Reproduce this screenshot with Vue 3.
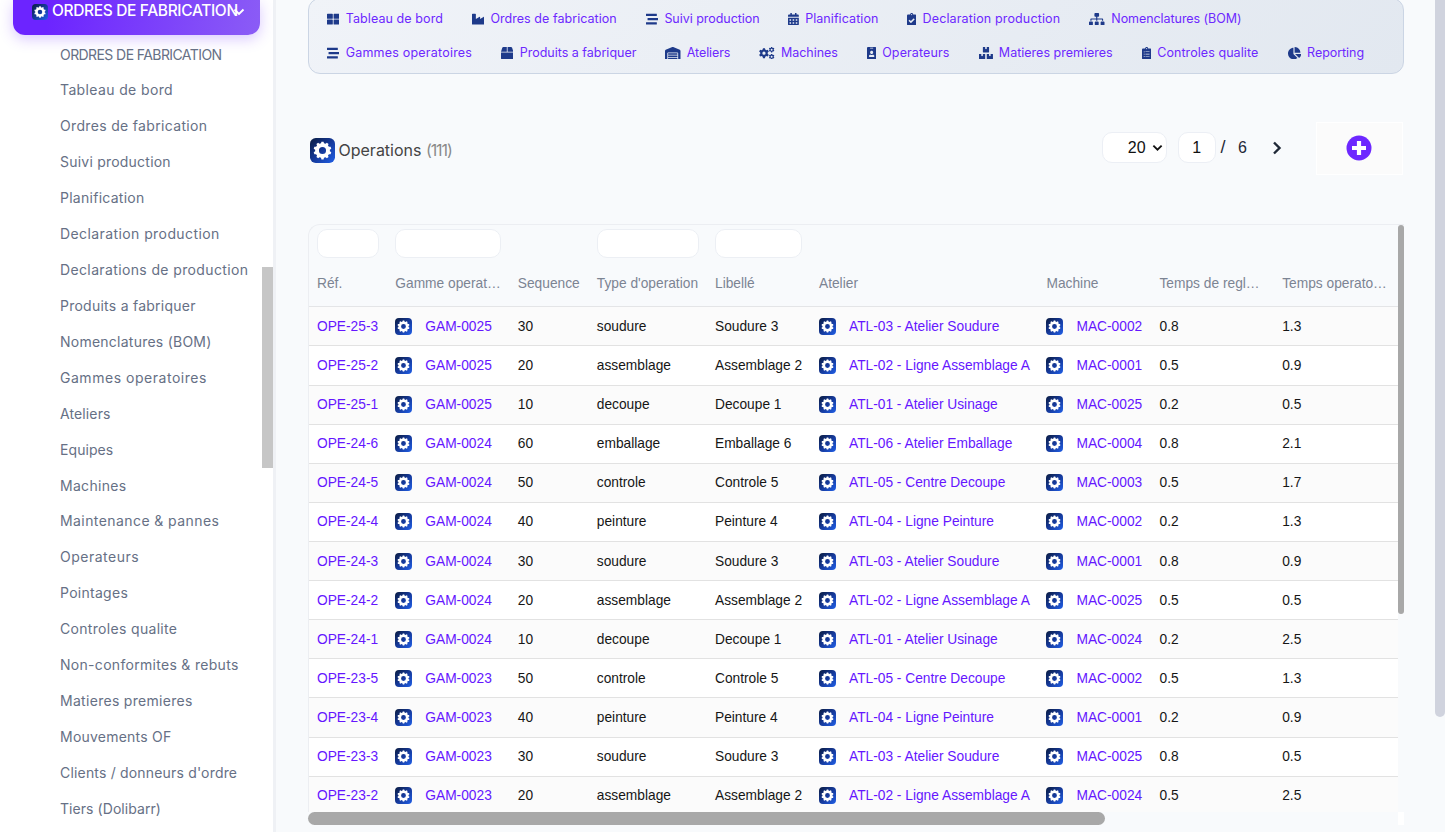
<template>
    <div class="app">
        <aside class="sidebar">
            <div class="sidebar__active">
                <svg class="sidebar__logo" viewBox="0 0 26 26"><use href="#logo" /></svg>
                <span class="sidebar__active-text">ORDRES DE FABRICATION</span>
                <svg class="sidebar__chevron" viewBox="0 0 12 8">
                    <path d="M1.5 1.5 6 6l4.5-4.5" fill="none" stroke="#ffffff" stroke-width="1.9" />
                </svg>
            </div>
            <ul class="sidebar__list">
                <li v-for="item in sideItems" :key="item.label" class="sidebar__item">
                    <span :style="{ letterSpacing: item.track + 'px' }">{{ item.label }}</span>
                </li>
            </ul>
            <span class="sidebar__scroll"></span>
        </aside>

        <main class="main">
            <nav class="topnav">
                <div v-for="(row, i) in navRows" :key="i" class="topnav__row">
                    <a v-for="link in row" :key="link.label" class="topnav__link" :style="{ width: link.width + 'px' }">
                        <svg
                            class="topnav__icon"
                            :viewBox="`0 0 ${icons[link.icon].w} 512`"
                            :style="{ width: (icons[link.icon].w / 512) * 12.4 + 'px' }"
                        >
                            <path :d="icons[link.icon].d" fill-rule="evenodd" />
                        </svg>
                        <span :style="{ letterSpacing: link.track + 'px' }">{{ link.label }}</span>
                    </a>
                </div>
            </nav>

            <header class="titlebar">
                <svg class="titlebar__logo" viewBox="0 0 26 26"><use href="#logo" /></svg>
                <h1 class="titlebar__title">Operations <span class="titlebar__count">(111)</span></h1>
                <div class="pager">
                    <div class="pager__select">
                        <span>20</span>
                        <svg viewBox="0 0 12 8">
                            <path d="M1.5 1.5 6 5.8l4.5-4.3" fill="none" stroke="#111111" stroke-width="2" />
                        </svg>
                    </div>
                    <div class="pager__page">1</div>
                    <span class="pager__slash">/</span>
                    <span class="pager__total">6</span>
                    <svg class="pager__next" viewBox="0 0 10 14">
                        <path d="M2 1.5 7.5 7 2 12.5" fill="none" stroke="#1f2937" stroke-width="2.4" />
                    </svg>
                </div>
                <div class="add">
                    <svg viewBox="0 0 26 26">
                        <circle cx="13" cy="13" r="12.5" fill="#6d28ff" />
                        <path d="M13 6v14M6 13h14" stroke="#ffffff" stroke-width="4.2" />
                    </svg>
                </div>
            </header>

            <section class="panel">
                <div class="panel__view">
                    <table class="grid">
                        <colgroup>
                            <col v-for="col in columns" :key="col.label" :style="{ width: col.width + 'px' }" />
                        </colgroup>
                        <thead>
                            <tr class="grid__filters">
                                <th v-for="col in columns" :key="col.label">
                                    <input v-if="col.filter" type="text" :style="{ width: col.filter + 'px' }" />
                                </th>
                            </tr>
                            <tr class="grid__labels">
                                <th v-for="col in columns" :key="col.label">{{ col.label }}</th>
                            </tr>
                        </thead>
                        <tbody>
                            <tr v-for="row in rows" :key="row.ref">
                                <td><a>{{ row.ref }}</a></td>
                                <td>
                                    <a class="grid__link"><svg viewBox="0 0 26 26"><use href="#logo" /></svg>{{ row.gamme }}</a>
                                </td>
                                <td>{{ row.seq }}</td>
                                <td>{{ row.type }}</td>
                                <td>{{ row.label }}</td>
                                <td>
                                    <a class="grid__link"><svg viewBox="0 0 26 26"><use href="#logo" /></svg>{{ row.atelier }}</a>
                                </td>
                                <td>
                                    <a class="grid__link"><svg viewBox="0 0 26 26"><use href="#logo" /></svg>{{ row.machine }}</a>
                                </td>
                                <td>{{ row.setup }}</td>
                                <td>{{ row.time }}</td>
                            </tr>
                        </tbody>
                    </table>
                    <div class="panel__vtrack"><span class="panel__vthumb"></span></div>
                </div>
                <div class="panel__htrack">
                    <span class="panel__hthumb"></span>
                    <span class="panel__corner"></span>
                </div>
            </section>
        </main>
        <span class="page-scroll"></span>

        <svg class="defs" width="0" height="0">
            <defs>
                <linearGradient id="badge" x1="0" y1="0" x2="1" y2="1">
                    <stop offset="0" stop-color="#0b1c40" />
                    <stop offset="0.5" stop-color="#15399a" />
                    <stop offset="1" stop-color="#2160e8" />
                </linearGradient>
                <symbol id="logo" viewBox="0 0 26 26">
                    <rect width="26" height="26" rx="6" fill="url(#badge)" />
                    <path :d="badgeGear" fill="#ffffff" fill-rule="evenodd" />
                </symbol>
            </defs>
        </svg>
    </div>
</template>

<script setup>
// Gear outline with a round hole in the middle
function gear(cx, cy, outer, inner, hole, teeth) {
    const step = (Math.PI * 2) / teeth;
    const points = [];
    for (let i = 0; i < teeth; i++) {
        const a = i * step - Math.PI / 2;
        [[-0.32, inner], [-0.19, outer], [0.19, outer], [0.32, inner]].forEach(([k, r]) => {
            const x = cx + Math.cos(a + k * step) * r;
            const y = cy + Math.sin(a + k * step) * r;
            points.push(`${x.toFixed(2)} ${y.toFixed(2)}`);
        });
    }
    return `M${points.join('L')}ZM${cx - hole} ${cy}a${hole} ${hole} 0 1 0 ${hole * 2} 0a${hole} ${hole} 0 1 0 ${-hole * 2} 0Z`;
}

const badgeGear = gear(13, 13, 9.3, 7.7, 3.7, 10);

const board = 'M336 64h-80c0-35.3-28.7-64-64-64s-64 28.7-64 64H48C21.5 64 0 85.5 0 112v352c0 26.5 21.5 48 48 48h288c26.5 0 48-21.5 48-48V112c0-26.5-21.5-48-48-48zM192 40c13.3 0 24 10.7 24 24s-10.7 24-24 24-24-10.7-24-24 10.7-24 24-24z';

const calendarCells = [64, 192, 320].map((x) => [256, 384].map((y) => `M${x} ${y}h64v64h-64z`).join('')).join('');

const icons = {
    grid: { w: 512, d: 'M296 32h192c13.255 0 24 10.745 24 24v160c0 13.255-10.745 24-24 24H296c-13.255 0-24-10.745-24-24V56c0-13.255 10.745-24 24-24zm-80 0H24C10.745 32 0 42.745 0 56v160c0 13.255 10.745 24 24 24h192c13.255 0 24-10.745 24-24V56c0-13.255-10.745-24-24-24zM0 296v160c0 13.255 10.745 24 24 24h192c13.255 0 24-10.745 24-24V296c0-13.255-10.745-24-24-24H24c-13.255 0-24 10.745-24 24zm296 184h192c13.255 0 24-10.745 24-24V296c0-13.255-10.745-24-24-24H296c-13.255 0-24 10.745-24 24v160c0 13.255 10.745 24 24 24z' },
    industry: { w: 512, d: 'M475.115 163.781L336 252.309v-68.28c0-18.916-20.931-30.399-36.885-20.248L160 252.309V56c0-13.255-10.745-24-24-24H24C10.745 32 0 42.745 0 56v400c0 13.255 10.745 24 24 24h464c13.255 0 24-10.745 24-24V184.029c0-18.917-20.931-30.399-36.885-20.248z' },
    stream: { w: 512, d: 'M16 128h416c8.84 0 16-7.16 16-16V48c0-8.84-7.16-16-16-16H16C7.16 32 0 39.16 0 48v64c0 8.84 7.16 16 16 16zm480 80H80c-8.84 0-16 7.16-16 16v64c0 8.84 7.16 16 16 16h416c8.84 0 16-7.16 16-16v-64c0-8.84-7.16-16-16-16zm-64 176H16c-8.84 0-16 7.16-16 16v64c0 8.84 7.16 16 16 16h416c8.84 0 16-7.16 16-16v-64c0-8.84-7.16-16-16-16z' },
    calendar: { w: 448, d: `M0 464c0 26.5 21.5 48 48 48h352c26.5 0 48-21.5 48-48V192H0v272z${calendarCells}M400 64h-48V16c0-8.8-7.2-16-16-16h-32c-8.8 0-16 7.2-16 16v48H160V16c0-8.8-7.2-16-16-16h-32c-8.8 0-16 7.2-16 16v48H48C21.5 64 0 85.5 0 112v48h448v-48c0-26.5-21.5-48-48-48z` },
    check: { w: 384, d: `${board}M313.2 271.8l-143 141.8c-4.7 4.7-12.3 4.6-17-.1l-82.6-83.3c-4.7-4.7-4.6-12.3.1-17L99.1 285c4.7-4.7 12.3-4.6 17 .1l46 46.4 106-105.2c4.7-4.7 12.3-4.6 17 .1l28.2 28.4c4.7 4.8 4.6 12.3-.1 17z` },
    sitemap: { w: 640, d: 'M128 352H32c-17.67 0-32 14.33-32 32v96c0 17.67 14.33 32 32 32h96c17.67 0 32-14.33 32-32v-96c0-17.67-14.33-32-32-32zm-24-80h192v48h48v-48h192v48h48v-57.59c0-21.17-17.23-38.41-38.41-38.41H344v-64h40c17.67 0 32-14.33 32-32V32c0-17.67-14.33-32-32-32H256c-17.67 0-32 14.33-32 32v96c0 17.67 14.33 32 32 32h40v64H94.41C73.23 224 56 241.23 56 262.41V320h48v-48zm264 80h-96c-17.67 0-32 14.33-32 32v96c0 17.67 14.33 32 32 32h96c17.67 0 32-14.33 32-32v-96c0-17.67-14.33-32-32-32zm240 0h-96c-17.67 0-32 14.33-32 32v96c0 17.67 14.33 32 32 32h96c17.67 0 32-14.33 32-32v-96c0-17.67-14.33-32-32-32z' },
    box: { w: 512, d: 'M509.5 184.6L458.9 32.8C452.4 13.2 434.1 0 413.4 0H272v192h238.7c-.4-2.5-.4-5-1.2-7.4zM240 0H98.6c-20.7 0-39 13.2-45.5 32.8L2.5 184.6c-.8 2.4-.8 4.9-1.2 7.4H240V0zM0 224v240c0 26.5 21.5 48 48 48h416c26.5 0 48-21.5 48-48V224H0z' },
    warehouse: { w: 640, d: 'M504 352H136.4c-4.4 0-8 3.6-8 8l-.1 48c0 4.4 3.6 8 8 8H504c4.4 0 8-3.6 8-8v-48c0-4.4-3.6-8-8-8zm0 96H136.1c-4.4 0-8 3.6-8 8l-.1 48c0 4.4 3.6 8 8 8h368c4.4 0 8-3.6 8-8v-48c0-4.4-3.6-8-8-8zm0-192H136.6c-4.4 0-8 3.6-8 8l-.1 48c0 4.4 3.6 8 8 8H504c4.4 0 8-3.6 8-8v-48c0-4.4-3.6-8-8-8zm106.5-139L338.4 3.7a48.15 48.15 0 0 0-36.9 0L29.5 117C11.7 124.5 0 141.9 0 161.3V504c0 4.4 3.6 8 8 8h80c4.4 0 8-3.6 8-8V256c0-17.6 14.6-32 32.6-32h382.8c18 0 32.6 14.4 32.6 32v248c0 4.4 3.6 8 8 8h80c4.4 0 8-3.6 8-8V161.3c0-19.4-11.7-36.8-29.5-44.3z' },
    cogs: { w: 640, d: gear(205, 256, 212, 158, 66, 6) + gear(522, 112, 118, 90, 40, 6) + gear(522, 400, 118, 90, 40, 6) },
    badge: { w: 384, d: 'M336 0H48C21.5 0 0 21.5 0 48v416c0 26.5 21.5 48 48 48h288c26.5 0 48-21.5 48-48V48c0-26.5-21.5-48-48-48zM144 32h96c8.8 0 16 7.2 16 16s-7.2 16-16 16h-96c-8.8 0-16-7.2-16-16s7.2-16 16-16zm48 128c35.3 0 64 28.7 64 64s-28.7 64-64 64-64-28.7-64-64 28.7-64 64-64zm112 236.8c0 10.6-10 19.2-22.4 19.2H102.4C90 416 80 407.4 80 396.8v-19.2c0-31.8 30.1-57.6 67.2-57.6h5c12.3 5.1 25.7 8 39.8 8s27.6-2.9 39.8-8h5c37.1 0 67.2 25.8 67.2 57.6v19.2z' },
    boxes: { w: 576, d: 'M560 288h-80v96l-32-21.3-32 21.3v-96h-80c-8.8 0-16 7.2-16 16v192c0 8.8 7.2 16 16 16h224c8.8 0 16-7.2 16-16V304c0-8.8-7.2-16-16-16zm-384-64h224c8.8 0 16-7.2 16-16V16c0-8.8-7.2-16-16-16h-80v96l-32-21.3L256 96V0h-80c-8.8 0-16 7.2-16 16v192c0 8.8 7.2 16 16 16zm64 64h-80v96l-32-21.3L96 384v-96H16c-8.8 0-16 7.2-16 16v192c0 8.8 7.2 16 16 16h224c8.8 0 16-7.2 16-16V304c0-8.8-7.2-16-16-16z' },
    list: { w: 384, d: `${board}M72 182h40v32H72zM144 186h168v24H144zM72 278h40v32H72zM144 282h168v24H144zM72 374h40v32H72zM144 378h168v24H144z` },
    pie: { w: 544, d: 'M527.79 288H290.5l158.03 158.03c6.04 6.04 15.98 6.53 22.19.68 38.7-36.46 65.32-85.61 73.13-140.86 1.34-9.46-6.51-17.85-16.06-17.85zm-15.83-64.8C503.72 103.74 408.26 8.28 288.8.04 279.68-.59 272 7.1 272 16.24V240h223.77c9.14 0 16.82-7.68 16.19-16.8zM224 288V50.71c0-9.55-8.39-17.4-17.84-16.06C86.99 51.49-4.1 155.6.14 280.37 4.5 408.51 114.83 513.59 243.03 511.98c50.4-.63 96.97-16.87 135.26-44.03 7.9-5.6 8.42-17.23 1.57-24.08L224 288z' }
};

const navRows = [
    [
        { label: 'Tableau de bord', icon: 'grid', width: 144.7, track: 0.09 },
        { label: 'Ordres de fabrication', icon: 'industry', width: 174, track: 0.05 },
        { label: 'Suivi production', icon: 'stream', width: 142.3, track: -0.04 },
        { label: 'Planification', icon: 'calendar', width: 119, track: 0.07 },
        { label: 'Declaration production', icon: 'check', width: 182.5, track: 0.14 },
        { label: 'Nomenclatures (BOM)', icon: 'sitemap', width: 160, track: -0.06 }
    ],
    [
        { label: 'Gammes operatoires', icon: 'stream', width: 174, track: 0.21 },
        { label: 'Produits a fabriquer', icon: 'box', width: 164, track: 0 },
        { label: 'Ateliers', icon: 'warehouse', width: 94.3, track: -0.1 },
        { label: 'Machines', icon: 'cogs', width: 107.3, track: -0.06 },
        { label: 'Operateurs', icon: 'badge', width: 112, track: 0.12 },
        { label: 'Matieres premieres', icon: 'boxes', width: 163, track: 0.01 },
        { label: 'Controles qualite', icon: 'list', width: 146, track: 0.07 },
        { label: 'Reporting', icon: 'pie', width: 90, track: -0.04 }
    ]
];

const sideItems = [
    { label: 'ORDRES DE FABRICATION', track: -0.58 },
    { label: 'Tableau de bord', track: 0.37 },
    { label: 'Ordres de fabrication', track: 0.33 },
    { label: 'Suivi production', track: 0.22 },
    { label: 'Planification', track: 0.27 },
    { label: 'Declaration production', track: 0.41 },
    { label: 'Declarations de production', track: 0.37 },
    { label: 'Produits a fabriquer', track: 0.25 },
    { label: 'Nomenclatures (BOM)', track: 0.24 },
    { label: 'Gammes operatoires', track: 0.53 },
    { label: 'Ateliers', track: 0.12 },
    { label: 'Equipes', track: 0.07 },
    { label: 'Machines', track: 0.3 },
    { label: 'Maintenance & pannes', track: 0.42 },
    { label: 'Operateurs', track: 0.5 },
    { label: 'Pointages', track: 0.28 },
    { label: 'Controles qualite', track: 0.32 },
    { label: 'Non-conformites & rebuts', track: 0.3 },
    { label: 'Matieres premieres', track: 0.3 },
    { label: 'Mouvements OF', track: 0.23 },
    { label: "Clients / donneurs d'ordre", track: 0.18 },
    { label: 'Tiers (Dolibarr)', track: 0.06 }
];

const columns = [
    { label: 'Réf.', width: 78.3, filter: 62 },
    { label: 'Gamme operat…', width: 122.5, filter: 106 },
    { label: 'Sequence', width: 79 },
    { label: "Type d'operation", width: 118.2, filter: 102 },
    { label: 'Libellé', width: 104, filter: 87 },
    { label: 'Atelier', width: 227.5 },
    { label: 'Machine', width: 113 },
    { label: 'Temps de regl…', width: 122.7 },
    { label: 'Temps operato…', width: 123.3 }
];

const steps = {
    10: { type: 'decoupe', label: 'Decoupe 1', atelier: 'ATL-01 - Atelier Usinage', setup: '0.2' },
    20: { type: 'assemblage', label: 'Assemblage 2', atelier: 'ATL-02 - Ligne Assemblage A', setup: '0.5' },
    30: { type: 'soudure', label: 'Soudure 3', atelier: 'ATL-03 - Atelier Soudure', setup: '0.8' },
    40: { type: 'peinture', label: 'Peinture 4', atelier: 'ATL-04 - Ligne Peinture', setup: '0.2' },
    50: { type: 'controle', label: 'Controle 5', atelier: 'ATL-05 - Centre Decoupe', setup: '0.5' },
    60: { type: 'emballage', label: 'Emballage 6', atelier: 'ATL-06 - Atelier Emballage', setup: '0.8' }
};

const rows = [
    [25, 30, '0002', '1.3'],
    [25, 20, '0001', '0.9'],
    [25, 10, '0025', '0.5'],
    [24, 60, '0004', '2.1'],
    [24, 50, '0003', '1.7'],
    [24, 40, '0002', '1.3'],
    [24, 30, '0001', '0.9'],
    [24, 20, '0025', '0.5'],
    [24, 10, '0024', '2.5'],
    [23, 50, '0002', '1.3'],
    [23, 40, '0001', '0.9'],
    [23, 30, '0025', '0.5'],
    [23, 20, '0024', '2.5']
].map(([gamme, seq, machine, time]) => ({
    ref: `OPE-${gamme}-${seq / 10}`,
    gamme: `GAM-00${gamme}`,
    machine: `MAC-${machine}`,
    seq,
    time,
    ...steps[seq]
}));
</script>

<style>
body {
    margin: 0;
    overflow: hidden;
    background: #f8fafc;
}
</style>

<style scoped>
.app {
    position: relative;
    display: flex;
    width: 1445px;
    height: 832px;
    overflow: hidden;
    font-family: Inter, 'Open Sans', sans-serif;
    background: #f8fafc;
}
.defs {
    position: absolute;
}
.sidebar {
    position: relative;
    box-sizing: border-box;
    width: 276px;
    flex: none;
    background: #ffffff;
    border-right: 3px solid #eff1f5;
}
.sidebar__active {
    display: flex;
    align-items: center;
    box-sizing: border-box;
    width: 247px;
    height: 35px;
    margin-left: 13px;
    padding: 0 15px 12px 19px;
    border-radius: 0 0 12px 12px;
    background: linear-gradient(100deg, #6c24ff 15%, #8b5cf6);
    box-shadow: 0 4px 14px rgba(109, 40, 255, 0.25);
    color: #ffffff;
}
.sidebar__logo {
    width: 16px;
    height: 16px;
    flex: none;
}
.sidebar__active-text {
    width: 184px;
    margin: -2px 0 0 4px;
    font-size: 15.5px;
    font-weight: 500;
    letter-spacing: -0.35px;
    white-space: nowrap;
}
.sidebar__chevron {
    width: 12px;
    height: 8px;
    flex: none;
    margin-left: -3px;
}
.sidebar__list {
    margin: 1.5px 0 0;
    padding: 0;
    list-style: none;
}
.sidebar__item {
    height: 35.93px;
    padding-left: 60px;
    line-height: 35.93px;
    font-size: 14px;
    color: #667085;
    white-space: nowrap;
}
.sidebar__scroll {
    position: absolute;
    top: 267px;
    right: 0;
    width: 11px;
    height: 201px;
    background: #c6c6c6;
}
.main {
    width: 1095.5px;
    flex: none;
    margin-left: 32px;
}
.topnav {
    box-sizing: border-box;
    height: 76px;
    margin-top: -2px;
    padding: 2px 0 0 18px;
    border: 1px solid #cbd5e4;
    border-radius: 12px;
    background: linear-gradient(135deg, #f0f3f8, #e2e8f0);
}
.topnav__row {
    display: flex;
    height: 34px;
}
.topnav__link {
    display: flex;
    align-items: center;
    flex: none;
    gap: 6.3px;
    font-size: 12.5px;
    color: #6d28ff;
    white-space: nowrap;
}
.topnav__icon {
    height: 12.4px;
    flex: none;
    margin-top: 2px;
    fill: #1e3a8a;
}
.titlebar {
    display: flex;
    align-items: center;
    height: 52px;
    margin-top: 48px;
}
.titlebar__logo {
    width: 25px;
    height: 25px;
    margin: 4px 0 0 2px;
}
.titlebar__title {
    width: 200px;
    margin: 3px 0 0 3.5px;
    font-size: 16px;
    font-weight: 400;
    color: #444444;
}
.titlebar__count {
    letter-spacing: -1.1px;
    color: #8a8a8a;
}
.pager {
    display: flex;
    align-items: center;
    margin: -1px 0 0 auto;
    font-family: 'Liberation Sans', Arial, sans-serif;
    font-size: 16px;
    color: #1f2937;
}
.pager__select,
.pager__page {
    display: flex;
    align-items: center;
    box-sizing: border-box;
    height: 31px;
    border: 1px solid #eceff5;
    border-radius: 10px;
    background: #ffffff;
    color: #111111;
}
.pager__select {
    justify-content: flex-end;
    gap: 6px;
    width: 65px;
    padding-right: 3px;
}
.pager__select svg {
    width: 11px;
    height: 8px;
}
.pager__page {
    justify-content: center;
    width: 38px;
    margin-left: 11px;
}
.pager__slash {
    margin-left: 5px;
    font-size: 18px;
}
.pager__total {
    margin-left: 12.5px;
}
.pager__next {
    width: 10px;
    height: 14px;
    margin-left: 25px;
}
.add {
    display: flex;
    align-items: center;
    justify-content: center;
    box-sizing: border-box;
    width: 87px;
    height: 53px;
    margin: 0 1px 0 33.5px;
    border: 1px solid #ffffff;
    background: #fbfbfb;
}
.add svg {
    width: 26px;
    height: 26px;
}
.panel {
    margin-top: 50px;
}
.panel__view {
    display: flex;
    box-sizing: border-box;
    height: 588px;
    overflow: hidden;
    border-top: 1px solid #eceef2;
    border-left: 1px solid #eceef2;
    border-radius: 12px 0 0 0;
}
.grid {
    width: 1088.5px;
    height: 100%;
    flex: none;
    table-layout: fixed;
    border-collapse: separate;
    border-spacing: 0;
    font-family: 'Liberation Sans', Arial, sans-serif;
    font-size: 13.75px;
    color: #161616;
}
.grid th,
.grid td {
    padding: 0 0 0 8px;
    text-align: left;
    white-space: nowrap;
}
.grid th {
    font-weight: 400;
    color: #7c8493;
}
.grid input {
    display: block;
    box-sizing: border-box;
    height: 29px;
    padding: 0;
    border: 1px solid #eceff4;
    border-radius: 10px;
    background: #ffffff;
}
.grid__filters {
    height: 37px;
}
.grid__labels {
    height: 45.3px;
}
.grid__labels th {
    padding-bottom: 2px;
    border-bottom: 1.5px solid #e4e5e7;
}
.grid tbody tr {
    height: 39.12px;
    background: #ffffff;
}
.grid tbody tr:nth-child(odd) {
    background: #fbfbfb;
}
.grid td {
    border-bottom: 1px solid #e2e2e2;
}
.grid a {
    color: #6516ff;
}
.grid__link {
    display: flex;
    align-items: center;
    gap: 13px;
}
.grid__link svg {
    width: 17px;
    height: 17px;
    flex: none;
}
.panel__vtrack {
    width: 6px;
    flex: none;
}
.panel__vthumb {
    display: block;
    width: 6px;
    height: 389px;
    border-radius: 4px;
    background: #a8a8a8;
}
.panel__htrack {
    display: flex;
    justify-content: space-between;
    height: 13px;
}
.panel__hthumb {
    width: 797px;
    border-radius: 7px;
    background: #a8a8a8;
}
.panel__corner {
    width: 6px;
    background: #ffffff;
}
.page-scroll {
    position: absolute;
    top: 0;
    right: 0;
    width: 10px;
    height: 717px;
    border-radius: 0 0 5px 5px;
    background: #d0d3de;
}
</style>
